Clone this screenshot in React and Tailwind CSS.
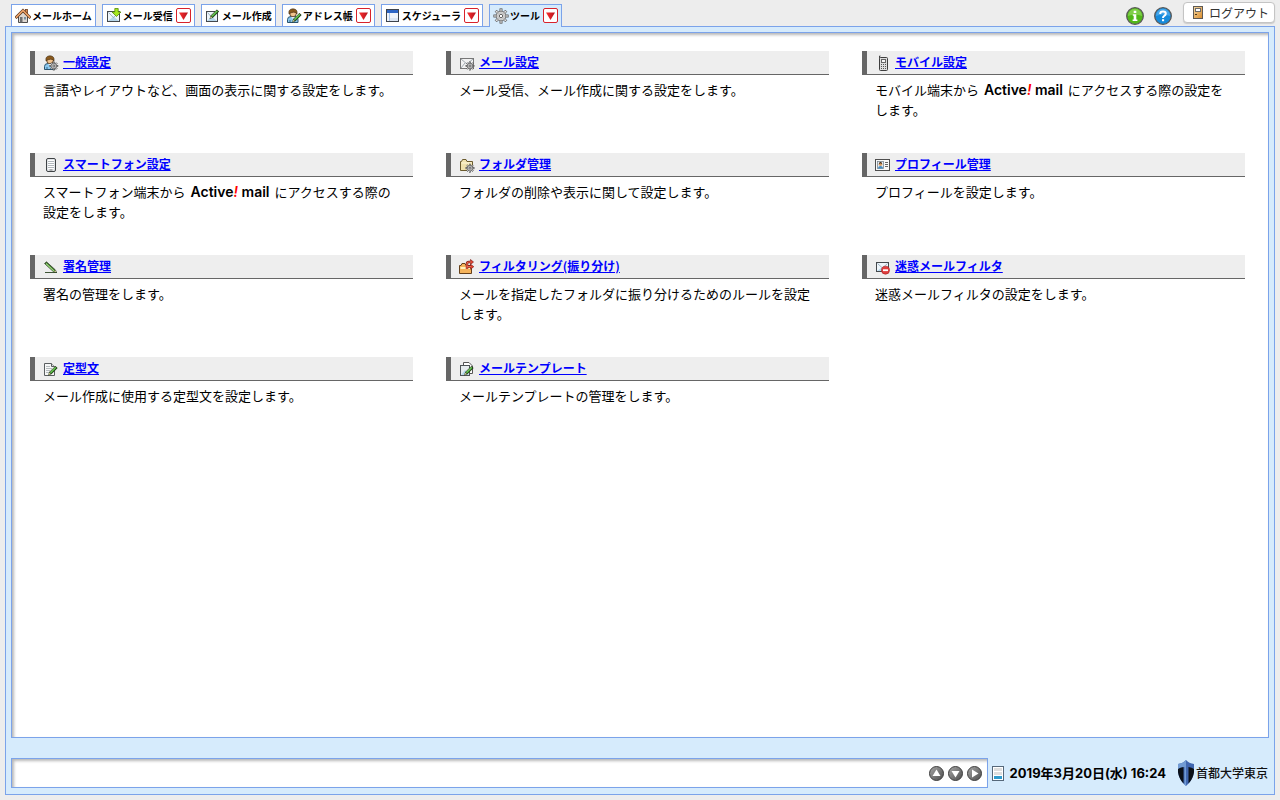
import React from "react";

const svgProps = { width: 16, height: 16, viewBox: "0 0 16 16", "aria-hidden": true, className: "block shrink-0" };

function Pencil({ x = 0, y = 0 }) {
  return (
    <g transform={`translate(${x} ${y})`}>
      <path d="M0 10 L1.2 6.6 L7.4 0.4 L9.6 2.6 L3.4 8.8 Z" fill="#1d3312" />
      <path d="M2 7 L7.4 1.6 L8.5 2.6 L3.1 8 Z" fill="#4bb53a" />
      <path d="M2 7 L7.4 1.6" stroke="#a4e88b" strokeWidth="0.8" />
      <path d="M0.4 9.6 L1.4 7.2 L2.8 8.6 Z" fill="#e8d7a0" />
    </g>
  );
}

const gearAngles = [0, 45, 90, 135, 180, 225, 270, 315];

function Gear({ cx, cy, r }) {
  const tooth = r * 0.36;
  return (
    <g>
      {gearAngles.map((angle) => (
        <rect
          key={angle}
          x={cx - tooth / 2}
          y={cy - r * 1.2}
          width={tooth}
          height={r * 0.6}
          fill="#e4e4e4"
          stroke="#4a4a4a"
          strokeWidth="0.7"
          transform={`rotate(${angle} ${cx} ${cy})`}
        />
      ))}
      <circle cx={cx} cy={cy} r={r * 0.8} fill="#dcdcdc" stroke="#5a5a5a" strokeWidth="0.7" />
      <circle cx={cx} cy={cy} r={r * 0.55} fill="none" stroke="#a8a8a8" strokeWidth="0.6" />
      <circle cx={cx} cy={cy} r={r * 0.28} fill="#fff" stroke="#444" strokeWidth="0.8" />
    </g>
  );
}

function Envelope({ x = 1, y = 4, w = 13, h = 10 }) {
  const r = x + w;
  const b = y + h;
  const m = x + w / 2;
  return (
    <g>
      <rect x={x + 0.5} y={y + 0.5} width={w - 1} height={h - 1} fill="#eef5fa" stroke="#44484c" />
      <path d={`M${x + 1} ${b - 1} L${m} ${y + h * 0.5} L${r - 1} ${b - 1} Z`} fill="#b5d6ea" />
      <path d={`M${x + 1.5} ${y + 1.5} L${m} ${y + h * 0.6} L${r - 1.5} ${y + 1.5}`} fill="none" stroke="#8ba6b6" strokeWidth="0.8" />
    </g>
  );
}

function Person() {
  return (
    <g>
      <path d="M1.5 14.5 V11.5 Q1.5 8.5 5 8.5 H9 Q12 8.5 12 11.5 V14.5 Z" fill="#8ac8ef" stroke="#2a5470" />
      <path d="M5 8.5 L7 11 L9 8.5 Z" fill="#fff" />
      <path d="M4 14 V12" stroke="#2a5470" strokeWidth="0.8" />
      <circle cx="7" cy="5.5" r="3.3" fill="#f1c28c" stroke="#4b3219" strokeWidth="0.8" />
      <path d="M3 6 Q2 1 7 0.8 Q11.8 1 11 6 Q10 4 7.5 4.2 Q5 4.4 3 6Z" fill="#8a5a1d" stroke="#3f2a10" strokeWidth="0.6" />
    </g>
  );
}

function Folder() {
  return (
    <g>
      <path d="M1.5 13.5 V4.5 H2.5 L3.5 2.5 H7 L8 4.5 H13.5 V13.5 Z" fill="#f0e2ad" stroke="#6b5b2e" />
      <path d="M2.5 6 H12.5" stroke="#fff8dc" />
    </g>
  );
}

function Notepad({ x = 2 }) {
  return (
    <g>
      <path d={`M${x + 0.5} 2.5 H${x + 7.5} L${x + 10.5} 5.5 V14.5 H${x + 0.5} Z`} fill="#f6f7f7" stroke="#5a5e60" />
      <path d={`M${x + 7.5} 2.5 V5.5 H${x + 10.5}`} fill="#ddd" stroke="#5a5e60" />
      <path d={`M${x + 2} 5.5 H${x + 6} M${x + 2} 7.5 H${x + 8} M${x + 2} 9.5 H${x + 6} M${x + 2} 11.5 H${x + 5}`} stroke="#b4babd" />
    </g>
  );
}

const art = {
  home: (
    <g>
      <rect x="10.5" y="1.5" width="2" height="5" fill="#d98c55" stroke="#703d1d" strokeWidth="0.8" />
      <path d="M3.5 8 V14.5 H12.5 V8 L8 3.5 Z" fill="#ddd6d0" stroke="#4d4d4d" />
      <path d="M1.5 9 L8 2.5 L14.5 9" fill="none" stroke="#57331b" strokeWidth="3" strokeLinecap="square" />
      <path d="M1.5 9 L8 2.5 L14.5 9" fill="none" stroke="#eda268" strokeWidth="1.6" strokeLinecap="square" />
      <rect x="5" y="9" width="2.5" height="5.5" fill="#6f6f6f" />
      <rect x="9" y="9" width="2" height="2.5" fill="#788fa0" />
    </g>
  ),
  inbox: (
    <g>
      <Envelope x={1} y={3} w={13} h={11} />
      <path d="M8.8 0.5 H12.2 V4 H15 L10.5 8.5 L6 4 H8.8 Z" fill="#a6e81f" stroke="#548a0a" strokeWidth="0.8" />
    </g>
  ),
  compose: (
    <g>
      <Envelope x={1} y={3} w={12} h={11} />
      <Pencil x={4.5} y={1} />
    </g>
  ),
  contacts: (
    <g>
      <Person />
      <Pencil x={6} y={4.5} />
    </g>
  ),
  calendar: (
    <g>
      <rect x="1.5" y="1.5" width="12" height="12" fill="#eef3fa" stroke="#3d434b" />
      <path d="M2 3.5 H13" stroke="#2d65c5" strokeWidth="3" />
      <path d="M4.5 5 V13" stroke="#a8c6ef" />
      <path d="M5 10 H13 V13 H5Z" fill="#dbe5f2" />
    </g>
  ),
  tools: <Gear cx={8} cy={8} r={6} />,
  general: (
    <g>
      <Person />
      <Gear cx={10.8} cy={11} r={3.4} />
    </g>
  ),
  mail: (
    <g>
      <rect x="1.5" y="3.5" width="13" height="10" fill="#f2f2f2" stroke="#777" />
      <path d="M2 4 L8 9 L14 4 M2 13 L6 8" fill="none" stroke="#a2abb1" />
      <Gear cx={11} cy={11} r={3.4} />
    </g>
  ),
  mobile: (
    <g>
      <path d="M4.5 4.5 V1 H5.5" fill="none" stroke="#444" />
      <rect x="4.5" y="2.5" width="8" height="13" rx="1" fill="#dedede" stroke="#3e3e3e" />
      <rect x="6.5" y="4.5" width="4" height="3" fill="#f6f6f6" stroke="#666" />
      <path d="M6 9.5 H11 M6 11.5 H11 M6 13.5 H11" stroke="#555" strokeDasharray="1 1" />
    </g>
  ),
  smartphone: (
    <g>
      <rect x="3.5" y="1.5" width="9" height="13" rx="1.5" fill="#e2e5e8" stroke="#3e4245" />
      <rect x="5" y="3" width="6" height="9" fill="#fff" />
      <path d="M5.5 4.5 H11 M5.5 6.5 H11 M5.5 8.5 H11 M5.5 10.5 H11" stroke="#65717a" strokeDasharray="1 1" />
      <path d="M6.5 13 H9.5" stroke="#777" />
    </g>
  ),
  folder: (
    <g>
      <Folder />
      <Gear cx={11} cy={11.2} r={3.4} />
    </g>
  ),
  profile: (
    <g>
      <rect x="0.5" y="2.5" width="14" height="11" fill="#f8f8f8" stroke="#4e4e4e" />
      <rect x="2.5" y="4.5" width="6" height="7" fill="#e4edf4" stroke="#7b8790" strokeWidth="0.8" />
      <path d="M3 11.5 Q3 9 5.5 9 Q8 9 8 11.5Z" fill="#458bc0" />
      <circle cx="5.5" cy="7.2" r="1.8" fill="#d69b62" />
      <path d="M3.8 7 Q4 5 5.5 5 Q7.2 5 7.2 7 L5.5 6.2Z" fill="#3b2614" />
      <path d="M10 5.5 H13 M10 7.5 H13 M10 9.5 H13" stroke="#666" />
    </g>
  ),
  signature: (
    <g>
      <path d="M2 13.5 H14" stroke="#3f5537" strokeWidth="1" />
      <path d="M1.5 4.5 L3.5 2.8 L12.5 11 L13.5 13.5 L10.5 12.8 Z" fill="#365e26" stroke="#23381b" strokeWidth="0.6" />
      <path d="M3 4.5 L11 12" stroke="#9adb7b" strokeWidth="1.1" />
      <path d="M11 12.5 L12.3 11.2 L13.2 13.2Z" fill="#e7d6a0" />
    </g>
  ),
  filter: (
    <g>
      <path d="M0.5 14.5 V6.5 H2 L3 4.5 H6 L7 6.5 H12.5 V14.5 Z" fill="#f5b35b" stroke="#65401b" />
      <path d="M1.5 9 H12" stroke="#fff1bd" strokeWidth="2" />
      <path d="M8 10 V4.5 Q8 3 10 3 H11 M8 7.5 H11.5" fill="none" stroke="#80201a" strokeWidth="2.4" />
      <path d="M11.5 0.5 L14.5 3 L11.5 5.5 Z M11.5 5.2 L14.8 7.7 L11.5 10.2 Z" fill="#e5422d" stroke="#80201a" strokeWidth="0.7" />
      <path d="M8 10 V4.5 Q8 3 10 3 H12 M8 7.5 H12" fill="none" stroke="#f0634c" strokeWidth="1.2" />
    </g>
  ),
  spam: (
    <g>
      <Envelope x={1} y={3} w={13} h={10} />
      <circle cx="10.5" cy="11.2" r="4" fill="#e03e3e" stroke="#a51e1e" strokeWidth="0.6" />
      <rect x="8" y="10.3" width="5" height="1.8" fill="#fff" />
    </g>
  ),
  phrase: (
    <g>
      <Notepad x={1} />
      <Pencil x={5} y={4.5} />
    </g>
  ),
  template: (
    <g>
      <path d="M4.5 1.5 H10 L13.5 5 V12.5 H4.5Z" fill="#fff" stroke="#555" />
      <rect x="1.5" y="4.5" width="9" height="10" fill="#e6ecef" stroke="#4d5356" />
      <path d="M2 14 L6 9 L10 14Z" fill="#b5d6ea" />
      <Pencil x={5} y={4.5} />
    </g>
  ),
};

function Icon({ name }) {
  return <svg {...svgProps}>{art[name]}</svg>;
}

const tabs = [
  { label: "メールホーム", icon: "home" },
  { label: "メール受信", icon: "inbox", menu: true },
  { label: "メール作成", icon: "compose" },
  { label: "アドレス帳", icon: "contacts", menu: true },
  { label: "スケジューラ", icon: "calendar", menu: true },
  { label: "ツール", icon: "tools", menu: true, active: true },
];

function Tab({ label, icon, menu, active }) {
  return (
    <div
      className={
        "flex shrink-0 items-center border border-b-0 border-[#7ba3ea] px-[3px] " +
        (active ? "relative -mb-px h-[23px] bg-[#d6ebfc] pb-px" : "h-[22px] bg-white")
      }
    >
      <a href="#" aria-current={active ? "page" : undefined} className="flex items-center gap-px whitespace-nowrap text-[10px] leading-4 font-bold">
        <Icon name={icon} />
        {label}
      </a>
      {menu && (
        <button
          type="button"
          aria-label={`${label} メニュー`}
          className="ml-[3px] flex h-[15px] w-[15px] items-center justify-center rounded-[2px] border border-[#d8222b] bg-white"
        >
          <svg width="9" height="8" viewBox="0 0 9 8" aria-hidden="true">
            <defs>
              <linearGradient id="redTriangle" x1="0" y1="0" x2="1" y2="0">
                <stop offset="0" stopColor="#fa3030" />
                <stop offset="1" stopColor="#b5111c" />
              </linearGradient>
            </defs>
            <path d="M0 0.5 H9 L4.5 8 Z" fill="url(#redTriangle)" />
          </svg>
        </button>
      )}
    </div>
  );
}

function InfoIcon() {
  return (
    <svg width="18" height="18" viewBox="0 0 18 18" aria-hidden="true">
      <circle cx="9" cy="9" r="8.3" fill="#51b719" stroke="#585858" strokeWidth="1.3" />
      <path d="M1.8 9 A7.2 7.2 0 0 1 16.2 9 Q9 6 1.8 9Z" fill="#7fcf48" />
      <path d="M7.7 3.8 H10.3 V6.1 H7.7Z M6.8 7.3 H10.3 V12.5 H11.4 V14 H6.6 V12.5 H7.7 V8.8 H6.8Z" fill="#fff" />
    </svg>
  );
}

function HelpIcon() {
  return (
    <svg width="18" height="18" viewBox="0 0 18 18" aria-hidden="true">
      <circle cx="9" cy="9" r="8.3" fill="#168bdc" stroke="#585858" strokeWidth="1.3" />
      <path d="M1.8 9 A7.2 7.2 0 0 1 16.2 9 Q9 6 1.8 9Z" fill="#45a6ea" />
      <path d="M6.2 7 Q6.2 4.6 9 4.6 Q11.8 4.6 11.8 6.8 Q11.8 8 10.2 8.9 Q9 9.5 9 11" fill="none" stroke="#fff" strokeWidth="2" />
      <rect x="8" y="12.2" width="2.1" height="2" fill="#fff" />
    </svg>
  );
}

function DoorIcon() {
  return (
    <svg width="12" height="14" viewBox="0 0 12 14" aria-hidden="true">
      <defs>
        <linearGradient id="door" x1="0" y1="0" x2="1" y2="1">
          <stop offset="0" stopColor="#f6dba8" />
          <stop offset="1" stopColor="#d98b2b" />
        </linearGradient>
      </defs>
      <rect x="1.5" y="0.5" width="9" height="12" fill="url(#door)" stroke="#5f5a54" />
      <rect x="3.5" y="2.5" width="5" height="3" fill="#fff" stroke="#6c6c6c" />
      <path d="M3 8.5 H5" stroke="#513612" />
    </svg>
  );
}

const arrows = [
  { label: "前へ", d: "M7.5 3.5 L11.5 10 H3.5 Z" },
  { label: "次へ", d: "M3.5 5 H11.5 L7.5 11.5 Z" },
  { label: "再生", d: "M5 3.5 L11.5 7.5 L5 11.5 Z" },
];

function ArrowButton({ label, d }) {
  return (
    <button type="button" aria-label={label} className="block">
      <svg width="15" height="15" viewBox="0 0 15 15" aria-hidden="true" className="block">
        <defs>
          <linearGradient id="ball" x1="0" y1="0" x2="1" y2="1">
            <stop offset="0" stopColor="#a8a8a8" />
            <stop offset="1" stopColor="#4c4c4c" />
          </linearGradient>
        </defs>
        <circle cx="7.5" cy="7.5" r="7" fill="url(#ball)" stroke="#3f3f3f" />
        <path d={d} fill="#fff" />
      </svg>
    </button>
  );
}

function Product() {
  return (
    <b className="mx-[2px] font-['Inter'] text-[14px] leading-5 font-semibold">
      Active<i className="text-[#ff0000]">!</i> mail
    </b>
  );
}

const settings = [
  { icon: "general", title: "一般設定", text: "言語やレイアウトなど、画面の表示に関する設定をします。" },
  { icon: "mail", title: "メール設定", text: "メール受信、メール作成に関する設定をします。" },
  { icon: "mobile", title: "モバイル設定", text: <>モバイル端末から <Product /> にアクセスする際の設定をします。</> },
  { icon: "smartphone", title: "スマートフォン設定", text: <>スマートフォン端末から <Product /> にアクセスする際の設定をします。</> },
  { icon: "folder", title: "フォルダ管理", text: "フォルダの削除や表示に関して設定します。" },
  { icon: "profile", title: "プロフィール管理", text: "プロフィールを設定します。" },
  { icon: "signature", title: "署名管理", text: "署名の管理をします。" },
  { icon: "filter", title: "フィルタリング(振り分け)", text: "メールを指定したフォルダに振り分けるためのルールを設定します。" },
  { icon: "spam", title: "迷惑メールフィルタ", text: "迷惑メールフィルタの設定をします。" },
  { icon: "phrase", title: "定型文", text: "メール作成に使用する定型文を設定します。" },
  { icon: "template", title: "メールテンプレート", text: "メールテンプレートの管理をします。" },
];

function Setting({ icon, title, text }) {
  return (
    <section>
      <h2 className="flex h-6 items-center gap-1 border-b border-l-[5px] border-b-[#666] border-l-[#666] bg-[#eee] pl-2 text-[12px] font-bold">
        <Icon name={icon} />
        <a href="#" className="pb-px leading-5 text-[#0000ff] underline">{title}</a>
      </h2>
      <p className="px-[13px] pt-[5px] text-[13px] leading-5">{text}</p>
    </section>
  );
}

export default function App() {
  return (
    <div className="flex min-h-screen flex-col bg-[#ededed] px-[5px] pb-[5px] font-['Noto_Sans_CJK_JP',sans-serif] text-black">
      <header className="flex h-[26px] items-end justify-between">
        <nav className="flex items-end gap-[6px] pl-[6px]">
          {tabs.map((tab) => (
            <Tab key={tab.label} {...tab} />
          ))}
        </nav>
        <div className="flex items-end">
          <a href="#" aria-label="情報" className="mr-[10px] mb-px"><InfoIcon /></a>
          <a href="#" aria-label="ヘルプ" className="mr-[11px] mb-px"><HelpIcon /></a>
          <button type="button" className="mb-[3px] flex h-[21px] items-center gap-[5px] rounded-[4px] border border-[#c4c4c4] bg-white pr-[5px] pl-2 text-[12px] leading-4 text-[#333] shadow-[0_1px_1px_#ccc]">
            <DoorIcon />
            ログアウト
          </button>
        </div>
      </header>

      <div className="flex flex-1 flex-col border border-[#7ba3ea] bg-[#d6ebfc] px-[5px] pt-[5px] pb-[6px]">
        <main className="flex-1 border border-[#7ba3ea] bg-white pt-[18px] pr-[23px] pb-8 pl-[18px] shadow-[inset_2px_2px_3px_#b8b8b8]">
          <div className="grid auto-rows-[minmax(70px,auto)] grid-cols-3 gap-x-[33px] gap-y-8">
            {settings.map((item) => (
              <Setting key={item.title} {...item} />
            ))}
          </div>
        </main>

        <footer className="mt-5 flex items-center pr-px">
          <div className="flex h-[30px] flex-1 items-center justify-end gap-1 border border-[#7ba3ea] bg-white pr-[5px] shadow-[inset_2px_2px_3px_#b8b8b8]">
            {arrows.map((arrow) => (
              <ArrowButton key={arrow.label} {...arrow} />
            ))}
          </div>
          <svg width="12" height="15" viewBox="0 0 12 15" className="ml-1" aria-hidden="true">
            <rect x="0.5" y="0.5" width="11" height="14" fill="#fff" stroke="#56687a" />
            <path d="M2 2 H10 V5 H2Z M2 6 H10 V9 H2Z" fill="#dedede" />
            <rect x="2" y="10" width="8" height="3" fill="#2f9bce" />
          </svg>
          <time dateTime="2019-03-20T16:24" className="ml-[6px] font-['Inter','Noto_Sans_CJK_JP',sans-serif] text-[13px] leading-5 font-bold whitespace-nowrap">
            2019年3月20日(水) 16:24
          </time>
          <div className="ml-3 flex items-center gap-[2px] text-[12px] leading-5 font-medium whitespace-nowrap text-[#111]">
            <svg width="16" height="26" viewBox="0 0 16 26" aria-hidden="true">
              <path d="M8 0 Q11 3.500 16 4 V12 Q15 20 8 26 Q1 20 0 12 V4 Q5 3.500 8 0Z" fill="#4167b0" />
              <path d="M8 0 Q5 3.500 0 4 V10 Q3 7 8 7Z" fill="#719bd4" />
              <path d="M0 9 Q2 7.500 5.500 7 V23.500 Q0.800 18.500 0 12Z M10.500 7 Q14 7.500 16 9 V12 Q15.200 18.500 10.500 23.500Z" fill="#0b1018" />
              <path d="M8 7 V26 L6.500 24.500 V7Z" fill="#719bd4" />
            </svg>
            首都大学東京
          </div>
        </footer>
      </div>
    </div>
  );
}
